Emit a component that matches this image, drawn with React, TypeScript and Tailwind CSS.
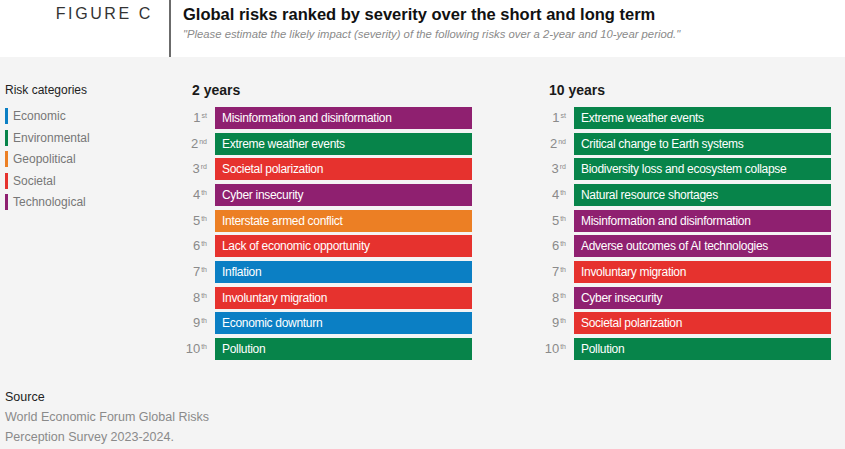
const COLORS: Record<string, string> = {
  eco: "bg-[#0b7fc4]",
  env: "bg-[#07844a]",
  geo: "bg-[#ec7f24]",
  soc: "bg-[#e6322e]",
  tech: "bg-[#8f2070]",
};

const legend = [
  { label: "Economic", c: "eco" },
  { label: "Environmental", c: "env" },
  { label: "Geopolitical", c: "geo" },
  { label: "Societal", c: "soc" },
  { label: "Technological", c: "tech" },
];

const shortTerm = [
  { label: "Misinformation and disinformation", c: "tech" },
  { label: "Extreme weather events", c: "env" },
  { label: "Societal polarization", c: "soc" },
  { label: "Cyber insecurity", c: "tech" },
  { label: "Interstate armed conflict", c: "geo" },
  { label: "Lack of economic opportunity", c: "soc" },
  { label: "Inflation", c: "eco" },
  { label: "Involuntary migration", c: "soc" },
  { label: "Economic downturn", c: "eco" },
  { label: "Pollution", c: "env" },
];

const longTerm = [
  { label: "Extreme weather events", c: "env" },
  { label: "Critical change to Earth systems", c: "env" },
  { label: "Biodiversity loss and ecosystem collapse", c: "env" },
  { label: "Natural resource shortages", c: "env" },
  { label: "Misinformation and disinformation", c: "tech" },
  { label: "Adverse outcomes of AI technologies", c: "tech" },
  { label: "Involuntary migration", c: "soc" },
  { label: "Cyber insecurity", c: "tech" },
  { label: "Societal polarization", c: "soc" },
  { label: "Pollution", c: "env" },
];

const suffix = (n: number) => (n === 1 ? "st" : n === 2 ? "nd" : n === 3 ? "rd" : "th");

function RankColumn({ title, rows, headPad }: { title: string; rows: { label: string; c: string }[]; headPad: string }) {
  return (
    <div className="w-[292px]">
      <div className={`${headPad} h-[16px] leading-[16px] text-[14px] font-bold text-[#1a1a1a] mb-[9px]`}>{title}</div>
      <div className="flex flex-col gap-[3.67px]">
        {rows.map((r, i) => (
          <div key={i} className="flex items-center gap-[8px]">
            <div className="w-[27px] h-[22px] flex justify-end items-start pt-[4px] text-[#8a8a8a] whitespace-nowrap">
              <span className="text-[13px] leading-[14px]">{i + 1}</span>
              <span className="text-[7px] leading-[8px] mt-[1px] ml-[1px]">{suffix(i + 1)}</span>
            </div>
            <div className={`${COLORS[r.c]} w-[257px] h-[22px] pl-[7px] flex items-center text-white text-[12px] tracking-[-0.3px] whitespace-nowrap`}>
              {r.label}
            </div>
          </div>
        ))}
      </div>
    </div>
  );
}

export default function App() {
  return (
    <div className="w-[845px] h-[449px] bg-[#f4f4f4] font-['Liberation_Sans',Arial,sans-serif] overflow-hidden">
      <div className="h-[57px] bg-white flex">
        <div className="w-[171px] border-r-2 border-[#6b6b6b] flex justify-end pr-[16px] pt-[4px]">
          <span className="text-[16px] leading-[20px] tracking-[2.6px] text-[#333] font-light">FIGURE C</span>
        </div>
        <div className="pl-[12px] pt-[4px]">
          <div className="text-[16.5px] leading-[20px] font-bold text-[#111]">Global risks ranked by severity over the short and long term</div>
          <div className="mt-[3px] text-[11.3px] leading-[14px] italic text-[#8a8a8a]">
            "Please estimate the likely impact (severity) of the following risks over a 2-year and 10-year period."
          </div>
        </div>
      </div>

      <div className="flex pt-[25px]">
        <div className="w-[180px] pl-[5px]">
          <div className="h-[16px] leading-[16px] text-[12px] text-[#222]">Risk categories</div>
          <div className="flex flex-col gap-[5.5px] mt-[10px]">
            {legend.map((l) => (
              <div key={l.label} className="flex items-center gap-[5px] h-[16px]">
                <div className={`${COLORS[l.c]} w-[3px] h-[16px]`} />
                <span className="text-[12px] text-[#777]">{l.label}</span>
              </div>
            ))}
          </div>
        </div>
        <RankColumn title="2 years" rows={shortTerm} headPad="pl-[12px]" />
        <div className="w-[67px]" />
        <RankColumn title="10 years" rows={longTerm} headPad="pl-[10px]" />
      </div>

      <div className="pl-[5px] mt-[27px] leading-[20px] text-[12.5px]">
        <div className="text-[#222]">Source</div>
        <div className="text-[#8a8a8a]">World Economic Forum Global Risks</div>
        <div className="text-[#8a8a8a]">Perception Survey 2023-2024.</div>
      </div>
    </div>
  );
}
